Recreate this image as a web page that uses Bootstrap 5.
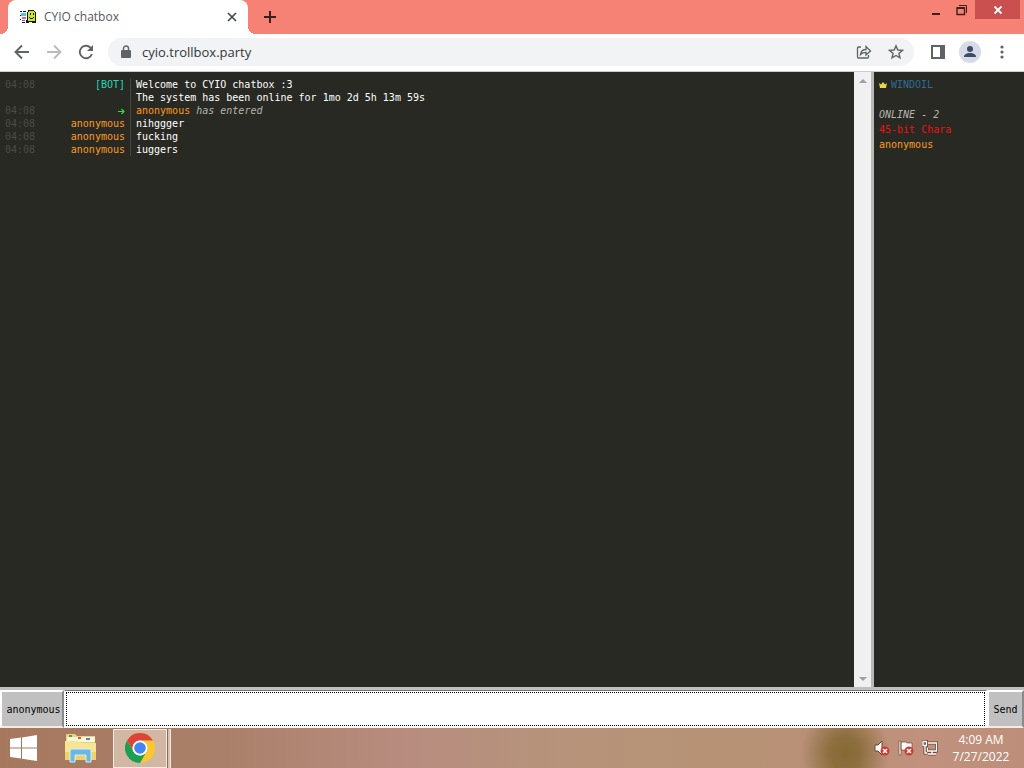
<!DOCTYPE html>
<html lang="en">
<head>
<meta charset="utf-8">
<meta name="viewport" content="width=device-width, initial-scale=1">
<title>CYIO chatbox</title>
<link href="https://cdn.jsdelivr.net/npm/bootstrap@5.3.0/dist/css/bootstrap.min.css" rel="stylesheet">
<style>
  body { font-family: "Open Sans", "Noto Sans", sans-serif; font-size: 12px; line-height: 16px; color: #55595d; }
  button { font: inherit; color: inherit; }
  svg { display: block; flex: none; }
  .plain { border: 0; padding: 0; background: none; display: grid; place-items: center; }

  /* browser window */
  .titlebar { height: 34px; background: #f68276; }
  .tab-gap { width: 8px; flex: none; }
  .page-tab { width: 240px; background: #fff; border-radius: 8px 8px 0 0; position: relative; }
  .page-tab::before, .page-tab::after { content: ""; position: absolute; bottom: 0; width: 8px; height: 8px; }
  .page-tab::before { right: 100%; background: radial-gradient(circle at 0 0, transparent 8px, #fff 8px); }
  .page-tab::after { left: 100%; background: radial-gradient(circle at 100% 0, transparent 8px, #fff 8px); }
  .new-tab { width: 28px; height: 34px; color: #3b1f1c; }
  .win-btn { width: 26px; height: 19px; color: #3a2219; }
  .win-close { width: 45px; height: 19px; background: #c9504e; color: #fff; }
  .toolbar { height: 38px; background: #fff; border-bottom: 1px solid #c9cfd1; color: #5f6368; padding: 0 6px 2px; }
  .tool { width: 32px; height: 32px; }
  .address { height: 28px; border-radius: 14px; background: #f1f3f4; margin-left: 6px; padding: 0 2px 0 13px; }
  .address input { border: 0; background: none; outline: 0; font-size: 13px; line-height: 20px; color: #33373b; padding: 0; margin-left: 11px; }
  .avatar { width: 22px; height: 22px; border-radius: 50%; background: #d5dce8; color: #3f4a66; overflow: hidden; }

  /* chat */
  .chat { background: #282923; font-family: "DejaVu Sans Mono", "Liberation Mono", monospace; font-size: 10px; color: #fff; }
  .log { padding-top: 6px; line-height: 13px; }
  .entry { display: grid; grid-template-columns: 35px 90px 1fr; }
  .entry time { padding-left: 5px; color: #4b4c46; }
  .entry .who { text-align: right; }
  .entry .who svg { margin: 4px 0 0 auto; }
  .entry .what { margin-left: 5px; padding-left: 5px; border-left: 1px solid #464741; }
  .orange { color: #ff9a20; }
  .teal { color: #1fd6b4; }
  .green { color: #30e030; }
  .dim { color: #b4b5ae; font-style: italic; }
  .scroller { width: 17px; background: #f0f0f0; color: #a0a0a0; }
  .scroller button { height: 17px; width: 17px; }
  .people { width: 153px; border-left: 3px solid #b9bab8; padding: 5px; line-height: 15px; }
  .people .room { color: #2d6b98; }
  .people .head { margin-top: 15px; }
  .people .red { color: #ee1212; }

  .composer { height: 41px; background: #c0c0c0; padding-top: 3px; font-family: "DejaVu Sans Mono", "Liberation Mono", monospace; font-size: 10px; color: #000; }
  .composer button { background: #c0c0c0; border: 2px solid; border-color: #fff #8a8a8a #f2ece4 #fff; padding: 2px 0 0; }
  .nick { width: 64px; }
  .composer .nick { padding-left: 3px; }
  .send { width: 37px; }
  .composer input { border: 1px solid #fff; border-top-color: #777; background: #fff; min-width: 0; outline: 1px dotted #000; outline-offset: -3px; padding: 4px; border-radius: 0; }

  /* taskbar */
  .taskbar { height: 40px; background:
      radial-gradient(ellipse 44px 52px at 845px 26px, #866a34 0, #8d6f40 35%, transparent 100%),
      linear-gradient(90deg, #a5785e 0, #ab806a 22%, #b88d80 40%, #b6937a 55%, #b79274 72%, #b89078 80%, #c0917c 90%, #bd8f7a 100%); color: #fff; }
  .start { width: 48px; height: 40px; }
  .pinned { width: 65px; height: 40px; }
  .running { width: 54px; height: 39px; background: #d3b7a5; border: 1px solid #f6e9df; box-shadow: 1px 0 #8a6a58, 3px 0 #d8bfb0, 4px 0 #f6e9df; }
  .clock { width: 86px; line-height: 17px; }
</style>
</head>
<body class="d-flex flex-column vh-100 overflow-hidden">

<header>
  <div class="titlebar d-flex align-items-start">
    <span class="tab-gap"></span>
    <div class="page-tab h-100 d-flex align-items-center ps-2 pe-1">
      <svg class="ms-1" width="16" height="16" viewBox="0 0 16 16" shape-rendering="crispEdges">
        <path fill="#16161c" d="M0 2h2v1H0zm3 0h3v1H3zM0 6h1v1H0zm0 4h1v1H0zm2 3h3v1H2zM8 1h6v1h1v1h1v11h-4v-1H9v1H6v-3h1V3h1z"/>
        <path fill="#49c8ec" d="M1 4h5v3H1z"/><path fill="#e45ad0" d="M2 8h4v2H2z"/><path fill="#4a60d8" d="M2 11h3v1H2z"/>
        <path fill="#c8e820" d="M9 2h5v1h1v9H8V3h1z"/><path fill="#16161c" d="M10 4h1v2h-1zm3 0h1v2h-1zM9 8h1v1h3v1h-3V9H9zM13 8h1v1h-1z"/>
      </svg>
      <span class="ms-2 flex-grow-1">CYIO chatbox</span>
      <button class="plain p-1" aria-label="Close tab"><svg width="16" height="16" viewBox="0 0 16 16" stroke="#45494d" stroke-width="1.7"><path d="M4 4l8 8M12 4l-8 8"/></svg></button>
    </div>
    <button class="plain new-tab ms-2" aria-label="New tab"><svg width="14" height="14" viewBox="0 0 14 14" stroke="currentColor" stroke-width="2"><path d="M7 1v12M1 7h12"/></svg></button>
    <div class="d-flex ms-auto">
      <button class="plain win-btn" aria-label="Minimize"><svg width="10" height="14" viewBox="0 0 10 14"><path d="M1 10h8v2H1z" fill="currentColor"/></svg></button>
      <button class="plain win-btn" aria-label="Restore"><svg width="12" height="12" viewBox="0 0 12 12" fill="none" stroke="currentColor"><path d="M3 1.500h7.500V9"/><path d="M1 4h7.500v6.500H1z" stroke-width="1.400"/><path d="M1 4h7.500" stroke-width="2"/></svg></button>
      <button class="plain win-close me-1" aria-label="Close"><svg width="10" height="10" viewBox="0 0 10 10" stroke="currentColor" stroke-width="1.800"><path d="M1.500 1.500l7 7M8.500 1.500l-7 7"/></svg></button>
    </div>
  </div>
  <nav class="toolbar d-flex align-items-center">
    <button class="plain tool" aria-label="Back"><svg width="16" height="16" viewBox="0 0 16 16" fill="none" stroke="currentColor" stroke-width="1.900"><path d="M15 8H2M8 1.500L1.500 8 8 14.500"/></svg></button>
    <button class="plain tool" aria-label="Forward"><svg width="16" height="16" viewBox="0 0 16 16" fill="none" stroke="#b9bbbd" stroke-width="1.900"><path d="M1 8h13M8 1.500L14.500 8 8 14.500"/></svg></button>
    <button class="plain tool" aria-label="Reload"><svg width="16" height="16" viewBox="0 0 16 16" fill="none" stroke="currentColor" stroke-width="1.900"><path d="M13.900 10A6.200 6.200 0 1 1 12.500 3.700L14 5.200"/><path d="M15 1v6H9z" fill="currentColor" stroke="none"/></svg></button>
    <div class="address d-flex align-items-center flex-grow-1">
      <svg width="10" height="14" viewBox="0 0 10 14"><path d="M2.500 6V3.500a2.500 2.500 0 0 1 5 0V6" fill="none" stroke="currentColor" stroke-width="1.400"/><rect y="5" width="10" height="8" rx="1" fill="currentColor"/></svg>
      <input class="flex-grow-1" aria-label="Address" value="cyio.trollbox.party">
      <button class="plain tool" aria-label="Share"><svg width="16" height="16" viewBox="0 0 16 16" fill="none" stroke="currentColor" stroke-width="1.300"><path d="M5 3H2.500Q1.500 3 1.500 4v9q0 1 1 1h9q1 0 1-1v-2"/><path d="M4.500 10.500c.4-3.500 2.500-5 5.500-5V2.500L14.500 7 10 11V8.300c-2.500 0-4 .5-5.500 2.200z"/></svg></button>
      <button class="plain tool" aria-label="Bookmark"><svg width="16" height="16" viewBox="0 0 16 16" fill="none" stroke="currentColor" stroke-width="1.400"><path d="M8 1.800l1.800 4.200 4.600.4-3.500 3 1.100 4.500L8 11.500l-4 2.400 1.100-4.500-3.500-3L6.200 6z"/></svg></button>
    </div>
    <button class="plain tool ms-2" aria-label="Side panel"><svg width="14" height="14" viewBox="0 0 14 14"><path d="M1 1h12v12H1z" fill="none" stroke="currentColor" stroke-width="2"/><path d="M9 1h4v12H9z" fill="currentColor"/></svg></button>
    <button class="plain tool" aria-label="Profile"><span class="avatar"><svg width="22" height="22" viewBox="0 0 22 22" fill="currentColor"><circle cx="11" cy="8" r="3"/><path d="M5 16c0-3 3-4 6-4s6 1 6 4z"/></svg></span></button>
    <button class="plain tool" aria-label="Menu"><svg width="4" height="14" viewBox="0 0 4 14" fill="currentColor"><circle cx="2" cy="2" r="1.600"/><circle cx="2" cy="7" r="1.600"/><circle cx="2" cy="12" r="1.600"/></svg></button>
  </nav>
</header>

<main class="chat d-flex flex-grow-1">
  <section class="log flex-grow-1" aria-label="Messages">
    <div class="entry"><time>04:08</time><span class="who teal">[BOT]</span><span class="what">Welcome to CYIO chatbox :3<br>The system has been online for 1mo 2d 5h 13m 59s</span></div>
    <div class="entry"><time>04:08</time><span class="who green"><svg width="7" height="7" viewBox="0 0 7 7" fill="none" stroke="currentColor" stroke-width="1.200" role="img" aria-label="entered"><path d="M0 3.500h6M3.500 1L6 3.500 3.500 6"/></svg></span><span class="what"><span class="orange">anonymous</span> <em class="dim">has entered</em></span></div>
    <div class="entry"><time>04:08</time><span class="who orange">anonymous</span><span class="what">nihggger</span></div>
    <div class="entry"><time>04:08</time><span class="who orange">anonymous</span><span class="what">fucking</span></div>
    <div class="entry"><time>04:08</time><span class="who orange">anonymous</span><span class="what">iuggers</span></div>
  </section>
  <div class="scroller d-flex flex-column justify-content-between">
    <button class="plain" aria-label="Scroll up"><svg width="8" height="4" viewBox="0 0 8 4"><path d="M0 4l4-4 4 4z" fill="currentColor"/></svg></button>
    <button class="plain" aria-label="Scroll down"><svg width="8" height="4" viewBox="0 0 8 4"><path d="M0 0l4 4 4-4z" fill="currentColor"/></svg></button>
  </div>
  <aside class="people">
    <div class="room d-flex align-items-center gap-1"><svg width="8" height="6" viewBox="0 0 8 6"><path d="M0 1l2 1.500L4 0l2 2.500L8 1 7 6H1z" fill="#e8d848"/></svg>WINDOIL</div>
    <div class="dim head">ONLINE - 2</div>
    <div class="red">45-bit Chara</div>
    <div class="orange">anonymous</div>
  </aside>
</main>

<form class="composer d-flex" onsubmit="return false">
  <button type="button" class="nick">anonymous</button>
  <input class="flex-grow-1" aria-label="Message">
  <button class="send">Send</button>
</form>

<footer class="taskbar d-flex align-items-center">
  <button class="plain start" aria-label="Start"><svg width="28" height="26" viewBox="0 0 28 26" fill="#fff"><path d="M0 4l11-1.500V12.500H0zM12 2.400L27 0v12.500H12zM0 13.500h11v10L0 22zM12 13.500h15V26l-15-2.300z"/></svg></button>
  <button class="plain pinned" aria-label="File Explorer"><svg width="32" height="30" viewBox="0 0 32 30"><path d="M1 2q0-1 1-1h8l2 2h18v24H1z" fill="#ecd27c"/><path d="M2 4h28v5H2z" fill="#fbf6dc"/><path d="M4 2h3v2H4z" fill="#4aa84a"/><path d="M13 4h3v2h-3z" fill="#d8583c"/><path d="M21 5h4v2h-4z" fill="#3f8ccc"/><path d="M0 8h13l2 2h16v17H0z" fill="#f6e593"/><path d="M0 19h31v8H0z" fill="#edd36c"/><path d="M5 29V18q0-2 2-2h17q2 0 2 2v11h-5v-7H10v7z" fill="#69b8e4" stroke="#d3effa"/></svg></button>
  <button class="plain running" aria-label="Chrome"><svg width="30" height="30" viewBox="0 0 30 30"><circle cx="15" cy="15" r="15" fill="#fbc92f"/><path d="M2 7.500A15 15 0 0 1 28 7.500H15a7.500 7.500 0 0 0-6.500 11.200z" fill="#db4437"/><path d="M2 7.500A15 15 0 0 0 15 30l6.500-11.200a7.500 7.500 0 0 1-13 0z" fill="#1a9f55"/><circle cx="15" cy="15" r="7.500" fill="#fff"/><circle cx="15" cy="15" r="5.800" fill="#4285f4"/></svg></button>
  <div class="d-flex ms-auto gap-2 align-items-center">
    <svg width="16" height="16" viewBox="0 0 16 16"><path d="M1 5h3l4-4v14l-4-4H1z" fill="#fff" stroke="#6d4535"/><circle cx="11" cy="11" r="4.500" fill="#d13a32"/><path d="M9 9l4 4M13 9l-4 4" stroke="#fff" stroke-width="1.500"/></svg>
    <svg width="16" height="16" viewBox="0 0 16 16"><path d="M1 1h2v14H1zM3 2h5l1 1h5v7H3z" fill="#fff" stroke="#6d4535" stroke-width=".7"/><circle cx="11" cy="11" r="4.500" fill="#d13a32"/><path d="M9 9l4 4M13 9l-4 4" stroke="#fff" stroke-width="1.500"/></svg>
    <svg width="16" height="16" viewBox="0 0 16 16" fill="none"><g stroke="#6d4535" stroke-width="3"><path d="M6 3h8.500v8H5.500V8M10 11v3M6 14h8M1 1.500h3.500v4H1zM3 5v8h2"/></g><g stroke="#fff" stroke-width="1.300"><path d="M6 3h8.500v8H5.500V8M10 11v3M6 14h8M1 1.500h3.500v4H1zM3 5v8h2"/></g></svg>
  </div>
  <div class="clock text-center">4:09 AM<br>7/27/2022</div>
</footer>

<script src="https://cdn.jsdelivr.net/npm/bootstrap@5.3.0/dist/js/bootstrap.bundle.min.js"></script>
</body>
</html>
